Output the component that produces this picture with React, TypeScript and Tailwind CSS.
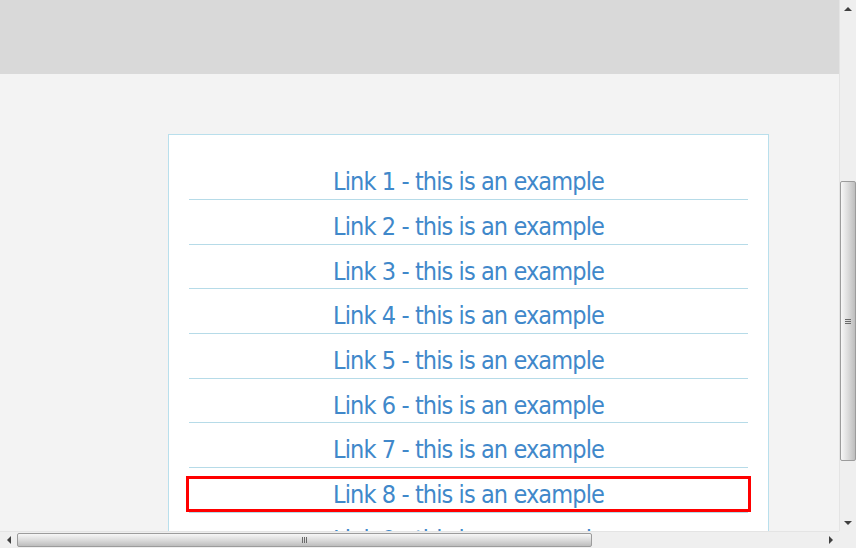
import React from "react";

const rows = [
  { n: 1, h: "h-[45px]" },
  { n: 2, h: "h-[45px]" },
  { n: 3, h: "h-[44px]" },
  { n: 4, h: "h-[45px]" },
  { n: 5, h: "h-[45px]" },
  { n: 6, h: "h-[44px]" },
  { n: 7, h: "h-[45px]" },
  { n: 8, h: "h-[45px]" },
  { n: 9, h: "h-[44px]" },
];

function VScrollbar() {
  return (
    <div className="flex w-[17px] flex-col border-l border-[#e4e4e4] bg-[#efefef]">
      <div className="flex h-[17px] items-center justify-center">
        <div className="h-0 w-0 border-x-[4px] border-b-[4px] border-x-transparent border-b-[#404040]" />
      </div>
      <div className="h-[164px]" />
      <div className="flex h-[280px] flex-col items-center justify-center rounded-[2px] border border-[#9c9c9c] bg-gradient-to-r from-[#f7f7f7] via-[#dcdcdc] to-[#bdbdbd]">
        <div className="flex flex-col gap-[1px]">
          <div className="h-[1px] w-[6px] bg-[#6a6a6a]" />
          <div className="h-[1px] w-[6px] bg-[#6a6a6a]" />
          <div className="h-[1px] w-[6px] bg-[#6a6a6a]" />
        </div>
      </div>
      <div className="flex-1" />
      <div className="flex h-[17px] items-center justify-center">
        <div className="h-0 w-0 border-x-[4px] border-t-[4px] border-x-transparent border-t-[#404040]" />
      </div>
    </div>
  );
}

function HScrollbar() {
  return (
    <div className="flex h-[17px] flex-1 items-stretch border-t border-[#e4e4e4] bg-[#efefef]">
      <div className="flex w-[17px] items-center justify-center">
        <div className="h-0 w-0 border-y-[4px] border-r-[4px] border-y-transparent border-r-[#404040]" />
      </div>
      <div className="my-[1px] flex w-[575px] items-center justify-center rounded-[2px] border border-[#9c9c9c] bg-gradient-to-b from-[#f7f7f7] via-[#dcdcdc] to-[#bdbdbd]">
        <div className="flex gap-[1px]">
          <div className="h-[6px] w-[1px] bg-[#6a6a6a]" />
          <div className="h-[6px] w-[1px] bg-[#6a6a6a]" />
          <div className="h-[6px] w-[1px] bg-[#6a6a6a]" />
        </div>
      </div>
      <div className="flex-1" />
      <div className="flex w-[17px] items-center justify-center">
        <div className="h-0 w-0 border-y-[4px] border-l-[4px] border-y-transparent border-l-[#404040]" />
      </div>
    </div>
  );
}

export default function App() {
  return (
    <div className="flex h-[548px] w-[856px] flex-col overflow-hidden bg-[#f3f3f3]">
      <div className="flex h-[531px] overflow-hidden">
        <main className="flex-1 overflow-hidden">
          <header className="h-[74px] bg-[#d9d9d9]" />
          <section className="ml-[168px] mt-[60px] w-[601px] border border-[#b9dfec] bg-white px-[20px] pt-[20px]">
            <ul className="flex flex-col">
              {rows.map((r) => (
                <li key={r.n} className={r.h + " shrink-0 border-b border-[#b6dbe8] pt-[11px]"}>
                  <a
                    href="#"
                    className={
                      "block h-[30px] text-center font-['DejaVu_Sans_Condensed','DejaVu_Sans',sans-serif] text-[25px] leading-[31px] tracking-[-0.9px] text-[#4088ca] " +
                      (r.n === 8 ? "outline-[3px] outline-solid outline-[#ff0000]" : "")
                    }
                  >
                    Link {r.n} - this is an example
                  </a>
                </li>
              ))}
            </ul>
          </section>
        </main>
        <VScrollbar />
      </div>
      <div className="flex h-[17px]">
        <HScrollbar />
        <div className="w-[17px] bg-[#efefef]" />
      </div>
    </div>
  );
}
